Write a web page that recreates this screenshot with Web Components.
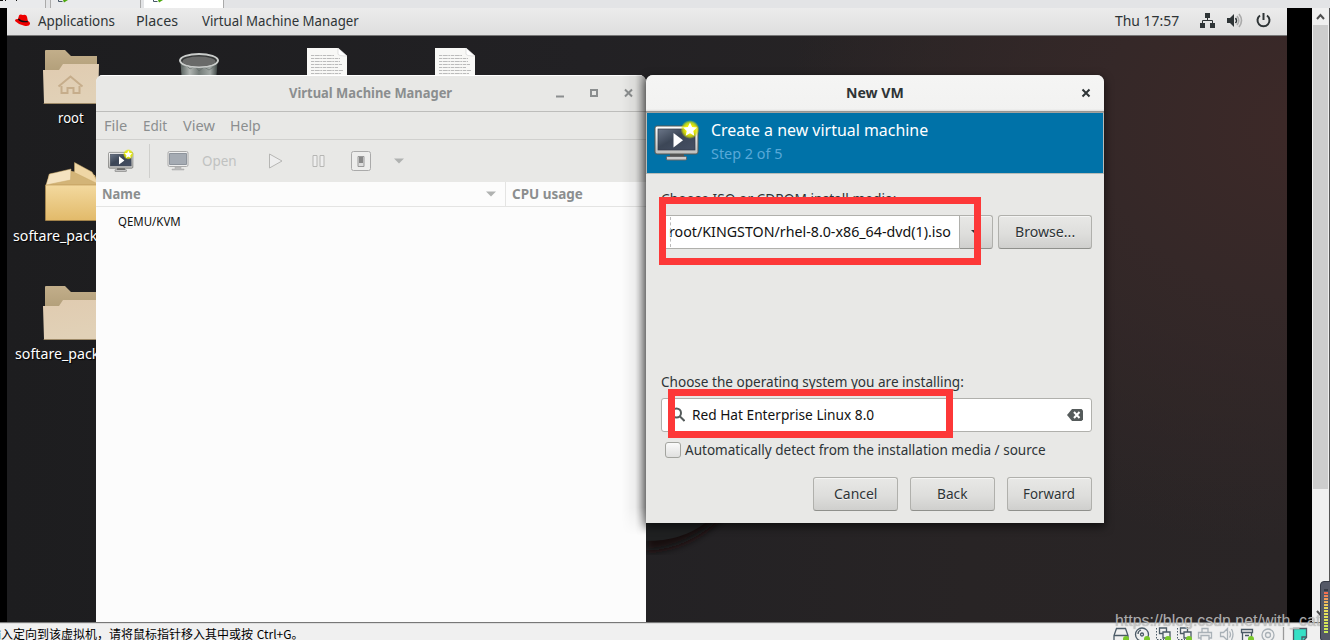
<!DOCTYPE html>
<html lang="en"><head><meta charset="utf-8"><title>Virtual Machine Manager</title>
<style>html,body{margin:0;height:100%;overflow:hidden;background:#000}body{font-family:"Noto Sans",sans-serif}</style></head>
<body><vm-console></vm-console>
<script>
const define=(name,css,html,ready)=>{
  const t=document.createElement('template');
  t.innerHTML=`<style>:host{display:block;box-sizing:border-box}*{box-sizing:border-box}${css}</style>${html}`;
  customElements.define(name,class extends HTMLElement{
    constructor(){super();this.attachShadow({mode:'open'}).append(t.content.cloneNode(true));}
    connectedCallback(){if(ready)ready(this,this.shadowRoot);}
  });
};

/* A label condensed or widened to a given width: <fit-text w="77">…</fit-text> */
define('fit-text',`:host{display:block;flex:none;white-space:pre;font-size:14.6px;line-height:20px;height:20px}
span{display:inline-block;transform-origin:0 50%;white-space:pre}`,`<span><slot></slot></span>`,(el,root)=>{
  const w=+el.getAttribute('w'),s=root.querySelector('span');
  el.style.width=w+'px';
  s.style.transform=`translateY(-1px) scaleX(${w/s.offsetWidth})`;
});

define('push-button',`:host{display:flex;align-items:center;justify-content:center;height:34px;border:1px solid #b0b0ac;border-bottom-color:#8f908c;border-radius:3px;background:linear-gradient(#e8e8e6,#dededc 55%,#cfcfcd);box-shadow:inset 0 1px #f4f4f3;color:#2e3436;text-shadow:0 1px #f4f4f4}`,`<slot></slot>`);

define('monitor-icon',`svg{display:block}`,`<svg width="46" height="42" viewBox="0 0 46 42"><defs><linearGradient id="f" y2="1" x2="0"><stop stop-color="#fff"/><stop offset="1" stop-color="#bdbdbb"/></linearGradient><linearGradient id="s" x2="1" y2="1"><stop stop-color="#6b7688"/><stop offset=".45" stop-color="#3c4656"/><stop offset="1" stop-color="#465064"/></linearGradient><radialGradient id="g"><stop offset=".45" stop-color="#f4f000"/><stop offset=".75" stop-color="#dfe800" stop-opacity=".75"/><stop offset="1" stop-color="#dfe800" stop-opacity="0"/></radialGradient></defs>
<path d="M16 34h14v4H16z" fill="#555"/><rect x="12.5" y="36.5" width="20" height="3.5" rx="1" fill="#ccc" stroke="#666"/><rect x="1" y="6" width="43" height="28" rx="2" fill="url(#f)" stroke="#555753"/><rect x="4" y="9" width="37" height="21" fill="url(#s)" stroke="#343b48" stroke-width=".7"/>
<path d="M19.500 13v14.500l9.500-7.200z" fill="#fff"/><circle cx="36" cy="9.500" r="9.500" fill="url(#g)"/><path d="M36 2.500l2.100 4.500 4.800.6-3.600 3.300 1 4.900-4.300-2.500-4.300 2.500 1-4.900-3.600-3.300 4.800-.6z" fill="#fff"/></svg>`,(el,r)=>{const w=el.getAttribute('w');if(w){const s=r.querySelector('svg');s.setAttribute('width',w);s.setAttribute('height',w*42/46);}});

define('folder-icon',`svg{display:block}`,`<svg width="57" height="56" viewBox="0 0 57 56"><defs><linearGradient id="a" x2="0" y2="1"><stop stop-color="#c2ae8a"/><stop offset="1" stop-color="#a8956f"/></linearGradient><linearGradient id="b" x2=".3" y2="1"><stop stop-color="#e0cbb0"/><stop offset="1" stop-color="#e1d1b7"/></linearGradient></defs><path d="M2 30V1q0-1 1-1h19l6 6h26v30z" fill="url(#a)"/><path d="M0 20h16l4-6h36l-1 39H1z" fill="url(#b)"/><path d="M.7 53.500h54.600" stroke="#9e8a68"/><path id="house" d="M15.500 36.500l12-10 12 10M18.500 36v7h6v-5h6v5h6v-7" fill="none" stroke="#c6ad8b" stroke-width="2"/></svg>`,(el,r)=>{if(!el.hasAttribute('home'))r.querySelector('#house').remove();});

define('text-file-icon',`svg{display:block}`,`<svg width="40" height="30" viewBox="0 0 40 30"><path d="M0 0h31l9 8v22H0z" fill="#f8f8f6"/><path d="M31 0v6q0 2 9 2z" fill="#fff" stroke="#ccc" stroke-width=".6"/><g stroke="#bbb" stroke-dasharray="3 .7 5 .6 2 .7"><path d="M4 7.500h23M4 10.500h29M4 13.500h29M4 16.500h31M4 19.500h27M4 22.500h32M4 25.500h30"/></g></svg>`);

define('bin-icon',`svg{display:block}`,`<svg width="40" height="30" viewBox="0 0 40 30"><defs><linearGradient id="m"><stop stop-color="#56605d"/><stop offset=".25" stop-color="#b0b5b2"/><stop offset=".5" stop-color="#737b78"/><stop offset=".8" stop-color="#a3aaa7"/><stop offset="1" stop-color="#3a4240"/></linearGradient></defs><path d="M1.500 9h37L37 30H3z" fill="url(#m)"/><path d="M3 14l4-2 4 4 5-3 4 5 5-4 5 3 6-4" stroke="#5e6764" stroke-width=".6" fill="none"/><ellipse cx="20" cy="7.500" rx="19" ry="6.500" fill="#363838" stroke="#c9ccca" stroke-width="2"/><ellipse cx="20" cy="8.500" rx="16.500" ry="5" fill="#696a69"/></svg>`);

define('box-icon',`svg{display:block}`,`<svg width="56" height="60" viewBox="0 0 56 60"><defs><linearGradient id="p" x2="0" y2="1"><stop stop-color="#f3d99f"/><stop offset="1" stop-color="#e2ba6a"/></linearGradient></defs><path d="M4 12l22-3 24 4 4 12H1z" fill="#d3b477"/><path d="M.5 23h55v35.500H.5z" fill="url(#p)" stroke="#b9924d" stroke-width=".6"/><path d="M4.500 12L26 7l-.5 11L1 23z" fill="#f5e3c0" stroke="#c8a869" stroke-width=".5"/><path d="M29.500.5L47 10l7 12.500-24.500-12z" fill="#efd6a5" stroke="#c8a869" stroke-width=".5"/></svg>`);

define('desktop-item',`:host{position:absolute;color:#fff;text-shadow:1px 1px 1px #000}`,`<slot></slot>`);

define('top-bar',`:host{display:flex;align-items:center;height:28px;padding:0 16px 3px 8px;background:linear-gradient(#ececec,#dedede);border-bottom:1px solid #777;color:#2e3436}
fit-text{margin-top:1px}svg{display:block;flex:none}.hat{margin:1px 7px 0 0}.places{margin-left:21px}.app{margin-left:24px}.clock{margin-left:auto}.i1{margin-left:21px}.i2{margin-left:12px}.i3{margin-left:13px}`,
`<svg class="hat" width="16" height="13" viewBox="0 0 16 13"><path d="M4 1.500Q5 0 7 .8q1 .4 2-.1 2.500-.2 3 2l.8 4q2.500 1.200 2.200 3.300-1 3-6.500 1.500Q3 10 .3 7.200-.8 5 3 5z" fill="#e00"/><path d="M3.300 5q3 3.500 9.500 2.500" fill="none" stroke="#111" stroke-width="1.300"/></svg>
<fit-text w="77">Applications</fit-text><fit-text class="places" w="42">Places</fit-text><fit-text class="app" w="157">Virtual Machine Manager</fit-text>
<fit-text class="clock" w="64">Thu 17:57</fit-text>
<svg class="i1" width="15" height="15"><path d="M5 0h5v5H5zM0 10h5v5H0zM10 10h5v5h-5z" fill="#2e3436"/><path d="M7.500 5v2.500M2.500 11V7.500h10V11" fill="none" stroke="#2e3436"/></svg>
<svg class="i2" width="16" height="15"><path d="M0 5h3l4-4v13l-4-4H0z" fill="#2e3436"/><path d="M8.500 5q2 2.500 0 5" stroke="#2e3436" stroke-width="1.500" fill="none"/><path d="M10 3q3.500 4.500 0 9M12 1q5 6.500 0 13" stroke="#aaa" stroke-width="1.600" fill="none"/></svg>
<svg class="i3" width="15" height="15"><path d="M4 2.500a6 6 0 1 0 7 0" fill="none" stroke="#2e3436" stroke-width="2"/><path d="M7.500 0v7" stroke="#2e3436" stroke-width="2"/></svg>`);

define('manager-window',`:host{position:absolute;left:89px;top:67px;width:550px;height:547px;border-radius:7px 7px 0 0;background:#fcfcfc;overflow:hidden;color:#8b8e8f;display:flex;flex-direction:column}
.title{display:flex;align-items:center;height:37px;flex:none;background:#e8e8e6;border-bottom:1px solid #bdbdbb;box-shadow:inset 0 1px #fff;padding:0 12px 0 193px;font-weight:700}
.title svg{margin-left:auto}.menu{display:flex;height:28px;flex:none;padding:4px 8px;gap:0 16px;background:#e8e8e6;border-bottom:1px solid #d0d0ce}
.tools{display:flex;align-items:center;height:42px;flex:none;background:#e8e8e6;padding-left:13px;color:#c0c2c1}
.sep{width:1px;height:34px;background:#cfcfcd;margin:0 16px 0 14px}.tools svg{display:block;flex:none}
.head{display:flex;height:25px;flex:none;border-bottom:1px solid #e4e4e3;font-weight:700}.name{display:flex;align-items:center;width:410px;border-right:1px solid #e4e4e3;padding:0 9px 0 6px;justify-content:space-between}.cpu{padding:2px 6px}.row{padding:6px 22px;color:#111}.row fit-text{font-size:12px}
.shade{position:absolute;right:0;top:0;width:24px;height:460px;background:linear-gradient(90deg,transparent,rgba(0,0,0,.06) 55%,rgba(0,0,0,.32));-webkit-mask:linear-gradient(#000 94%,transparent)}`,
`<div class="title"><fit-text w="163">Virtual Machine Manager</fit-text><svg width="78" height="12"><path d="M0 9.500h8" stroke="#8b8e8f" stroke-width="2"/><path d="M35 3h6v6h-6z" fill="none" stroke="#8b8e8f" stroke-width="2"/><path d="M69 2.500l7 7m0-7l-7 7" stroke="#8b8e8f" stroke-width="2"/></svg></div>
<div class="menu"><fit-text w="23">File</fit-text><fit-text w="24">Edit</fit-text><fit-text w="32" style="margin-right:-1px">View</fit-text><fit-text w="31">Help</fit-text></div>
<div class="tools"><monitor-icon w="26" style="margin:-1px 0 0 -1px"></monitor-icon><div class="sep" style="margin-left:15px"></div>
<svg width="24" height="20"><rect x="2" y=".5" width="20" height="15" rx="1.500" fill="#eee" stroke="#aaa"/><path d="M3.500 2.500h17v11h-17z" fill="#a5abb3" stroke="#8e949c"/><path d="M9 16h6v2h3v1H6v-1h3z" fill="#bbb" stroke="#aaa" stroke-width=".5"/></svg>
<fit-text w="35" style="margin-left:12px">Open</fit-text>
<svg width="16" height="18" style="margin-left:31px"><path d="M1.500 2l12.500 7-12.500 7z" fill="#eee" stroke="#b6b6b4"/></svg>
<svg width="14" height="14" style="margin-left:28px"><path d="M1 1.500h4v11H1zM8 1.500h4v11H8z" fill="#eee" stroke="#b6b6b4"/></svg>
<svg width="20" height="20" style="margin-left:25px"><rect x=".5" y=".5" width="19" height="19" rx="2" fill="#ededec" stroke="#aaa"/><path d="M7 5.500h6v10H7z" fill="#ddd" stroke="#999"/><path d="M8 6h4v6H8z" fill="#888"/></svg>
<svg width="10" height="6" style="margin-left:23px"><path d="M0 .5h10l-5 5z" fill="#b0b2b1"/></svg></div>
<div class="head"><div class="name"><fit-text w="39">Name</fit-text><svg width="10" height="6"><path d="M0 .5h10l-5 5z" fill="#b0b2b1"/></svg></div><div class="cpu"><fit-text w="71">CPU usage</fit-text></div></div>
<div class="row"><fit-text w="63">QEMU/KVM</fit-text></div><div class="shade"></div>`);

define('marker-box',`:host{position:absolute;border:7px solid #fd3838}`,``);

define('new-vm-window',`:host{position:absolute;left:639px;top:67px;width:458px;height:448px;border-radius:7px 7px 0 0;background:#e8e8e6;color:#2e3436;box-shadow:0 3px 9px 1px rgba(0,0,0,.55)}
.title{display:flex;align-items:center;justify-content:center;height:38px;padding:0 0 2px;background:linear-gradient(#f5f5f4,#f2f2f1 34px,#dededc 36px,#8f8f8c 36px,#a9a9a6);border-radius:7px 7px 0 0;font-weight:700;position:relative}
.title svg{position:absolute;right:13px;top:13px}
.banner{display:flex;height:61px;background:#0072a8;border:solid #b8bcb8;border-width:0 1px 1px;padding:7px 7px;color:#fff}.banner .txt{margin-left:11px;margin-top:1px}.banner .step{color:#58a9d8;margin-top:3px}.banner fit-text:first-child{font-size:16px}
.body{padding:15px 12px 0 15px}.media{display:flex;margin-top:6px}.entry{background:#fff;border:1px solid #b0b0ac;height:34px;display:flex;align-items:center;color:#111}.iso{width:298px;border-radius:3px 0 0 3px;border-right:0;padding-left:7px;overflow:hidden;position:relative}.iso i{position:absolute;left:8px;top:1px;height:30px;border-left:1px dashed #bbb}.dd{width:34px;border-radius:0 3px 3px 0}.browse{width:94px;margin-left:5px}
.os{margin-top:123px}.search{margin-top:6px;border-radius:3px;padding:0 8px 0 9px}.search .clear{margin-left:auto}
.auto{display:flex;align-items:center;margin:8px 0 0 4px;height:20px}.check{width:16px;height:16px;border:1px solid #a3a49f;border-radius:3px;background:linear-gradient(#fafafa,#e0e0df);margin-right:4px}
.actions{display:flex;justify-content:flex-end;gap:12px;margin-top:17px}.actions push-button{width:85px;padding-right:1px}`,
`<div class="title"><fit-text w="58">New VM</fit-text><svg width="10" height="10"><path d="M1.500 1.500l7 7m0-7l-7 7" stroke="#2e3436" stroke-width="2"/></svg></div>
<div class="banner"><monitor-icon></monitor-icon><div class="txt"><fit-text w="217">Create a new virtual machine</fit-text><fit-text class="step" w="71">Step 2 of 5</fit-text></div></div>
<div class="body"><fit-text w="235">Choose ISO or CDROM install media:</fit-text>
<div class="media"><div class="entry iso"><fit-text w="282">root/KINGSTON/rhel-8.0-x86_64-dvd(1).iso</fit-text><i></i></div><push-button class="dd"><svg width="10" height="5" style="margin-right:1px"><path d="M0 0h10L5 5z" fill="#2e3436"/></svg></push-button><push-button class="browse"><fit-text w="60">Browse...</fit-text></push-button></div>
<fit-text class="os" w="303">Choose the operating system you are installing:</fit-text>
<div class="entry search"><svg width="14" height="16"><circle cx="5.500" cy="6" r="4.500" fill="none" stroke="#555b5b" stroke-width="2"/><path d="M8.500 9l5 5" stroke="#555b5b" stroke-width="2"/></svg><fit-text w="182" style="margin-left:7px">Red Hat Enterprise Linux 8.0</fit-text><svg class="clear" width="16" height="12"><path d="M5 0h9.500L16 1.500v9L14.500 12H5L0 6z" fill="#555b5b"/><path d="M7 3l5.500 6m0-6L7 9" stroke="#fff" stroke-width="2"/></svg></div>
<div class="auto"><div class="check"></div><fit-text w="361">Automatically detect from the installation media / source</fit-text></div>
<div class="actions"><push-button><fit-text w="43">Cancel</fit-text></push-button><push-button><fit-text w="30">Back</fit-text></push-button><push-button><fit-text w="52">Forward</fit-text></push-button></div></div>
<marker-box style="left:13px;top:122px;width:322px;height:68px"></marker-box><marker-box style="left:22px;top:314px;width:285px;height:49px"></marker-box>`);

define('guest-screen',`:host{position:relative;width:1280px;height:614px;overflow:hidden;background:radial-gradient(ellipse 520px 420px at 1300px 120px,#3d2928,#352828 40%,rgba(46,38,39,0)),linear-gradient(90deg,#1d1d1f,#222124 45%,#282425 75%,#2a2526)}
.sweep{position:absolute;left:639px;top:515px}`,
`<svg class="sweep" width="200" height="50"><defs><filter id="z"><feGaussianBlur stdDeviation="4"/></filter></defs><path d="M0-10H80Q45 26 0 28z" fill="#130c0b" filter="url(#z)"/><path d="M0-10H70Q45 18 0 18z" fill="#1f2021"/></svg>
<top-bar></top-bar>
<desktop-item style="left:36px;top:42px"><folder-icon home></folder-icon></desktop-item><desktop-item style="left:51px;top:100px"><fit-text w="26">root</fit-text></desktop-item>
<desktop-item style="left:172px;top:45px"><bin-icon></bin-icon></desktop-item><desktop-item style="left:300px;top:40px"><text-file-icon></text-file-icon></desktop-item><desktop-item style="left:428px;top:40px"><text-file-icon></text-file-icon></desktop-item>
<desktop-item style="left:38px;top:154px"><box-icon></box-icon></desktop-item><desktop-item style="left:6px;top:218px"><fit-text w="109">softare_package</fit-text></desktop-item>
<desktop-item style="left:36px;top:278px"><folder-icon></folder-icon></desktop-item><desktop-item style="left:8px;top:336px"><fit-text w="109">softare_package</fit-text></desktop-item>
<manager-window></manager-window><new-vm-window></new-vm-window>`);

define('host-tabs',`:host{display:flex;height:8px;background:#e3e4e6;overflow:hidden}.t{height:8px;border-right:1px solid #aaa;background:#e9eaec}.a{width:46px}.b{width:90px;margin-left:4px;border-left:1px solid #aaa;padding-left:6px;width:91px}.c{width:80px;margin-left:3px;background:#fff;padding-left:8px}svg{display:block}`,
`<div class="t a"><svg width="20" height="8"><path d="M0 .5h3M5.500 0v1M16.500 0v1" stroke="#111"/></svg></div><div class="t b"><svg width="14" height="3"><path d="M1.500 0v1.500h4" stroke="#456" fill="none"/><path d="M6 0h5L7 2.500z" fill="#4ba80c"/></svg></div><div class="t c"><svg width="14" height="3"><path d="M1.500 0v1.500h4" stroke="#456" fill="none"/><path d="M6 0h5L7 2.500z" fill="#4ba80c"/></svg></div>`);

define('scroll-rail',`:host{width:18px;background:#f0f0f0;border-right:1px solid #555;padding-left:1px;display:flex;flex-direction:column;position:relative}svg{display:block}.thumb{height:464px;width:15px;background:#cdcdcd}.down{margin-top:auto;margin-bottom:4px}`,
`<svg width="15" height="17"><path d="M4 11l3.500-4 3.500 4" fill="none" stroke="#505050" stroke-width="2"/></svg><div class="thumb"></div><svg class="down" width="15" height="9"><path d="M4 2l3.500 4L11 2" fill="none" stroke="#505050" stroke-width="2"/></svg>`);

define('status-bar',`:host{display:flex;align-items:flex-start;height:18px;background:#f0f0f0;border-top:1px solid #777;box-shadow:inset 0 1px #ddd;overflow:hidden;padding-right:20px}
.msg{font:12px/15px "Noto Sans CJK SC",sans-serif;margin:3px 0 0 -11px;color:#000;white-space:pre;word-spacing:1px}svg{display:block;margin:4px 0 0 auto}`,
`<div class="msg">输入定向到该虚拟机，请将鼠标指针移入其中或按 Ctrl+G。</div>
<svg width="197" height="14" fill="none" stroke="#4b5a66" stroke-width="1.300"><path d="M3.500 1.500h9l2.500 7v6H1v-6zM1 8.500h14"/><circle cx="29" cy="7.500" r="6.500"/><circle cx="29" cy="7.500" r="1.500"/><path d="M25 7q0-3 3-4"/>
<g><path d="M46.500 1h7v5.500h-7z"/><path d="M50 5h7v6h-7z" fill="#f0f0f0"/><path d="M43.500 1v12M44 12.500h7" stroke-width="1" stroke-dasharray="1.500 1.500"/></g><g transform="translate(21)"><path d="M46.500 1h7v5.500h-7z"/><path d="M50 5h7v6h-7z" fill="#f0f0f0"/><path d="M43.500 1v12M44 12.500h7" stroke-width="1" stroke-dasharray="1.500 1.500"/></g>
<g stroke="#a9b1b7"><path d="M89 5V1.500h6V5M88 11h-2.500V5.500h13V11H96M88 8.500h8V14h-8z"/><path d="M107.500 5.500h3l4-4v12l-4-4h-3zM116.500 4.500q2 3 0 6M118.500 2q3 5 0 11"/><circle cx="155" cy="8" r="6"/><circle cx="155" cy="8" r="2.500"/></g><path d="M128.500 2.500h11v3h-11zM129.500 6v8h9V6M132 8.500h4"/><path d="M170.500 0v14" stroke="#999"/>
<path d="M180.500 1.500h13v9l-4 4h-9z" fill="#36e0c6"/><path d="M193 10h-4v4"/><g fill="#79c82a" stroke="none"><circle cx="13" cy="12" r="3"/><circle cx="34" cy="12" r="3"/><circle cx="55" cy="12" r="3"/><circle cx="76" cy="12" r="3"/><circle cx="138" cy="12" r="3"/></g></svg>`);

define('level-meter',`:host{position:absolute;left:1320px;top:581px;width:12px;height:60px;background:#555967;border:1px solid #343844;border-radius:4px 0 0 3px;padding:6px 0 0 3px}.bars{width:4px;height:46px;background:repeating-linear-gradient(#555967 0 1px,transparent 1px 3px),linear-gradient(#373b45 0 3px,#f4674f 4px,#f2a55d 12px,#eddb5b 20px,#c8ec55)}`,`<div class="bars"></div>`);

define('vm-console',`:host{position:relative;width:1330px;height:640px;overflow:hidden;background:#000}.main{display:grid;grid-template-columns:7px 1280px 25px 18px;height:614px}.main guest-screen{grid-column:2}.main scroll-rail{grid-column:4}
.mark{position:absolute;left:1115px;top:612px;color:rgba(205,205,205,.8);font-family:"Liberation Sans",sans-serif;text-shadow:0 0 1px rgba(80,80,80,.5)}.mark fit-text{font-size:16px}`,
`<host-tabs></host-tabs><div class="main"><guest-screen></guest-screen><scroll-rail></scroll-rail></div><status-bar></status-bar><div class="mark"><fit-text w="205">https://blog.csdn.net/with_cat</fit-text></div><level-meter></level-meter>`);
</script></body></html>
